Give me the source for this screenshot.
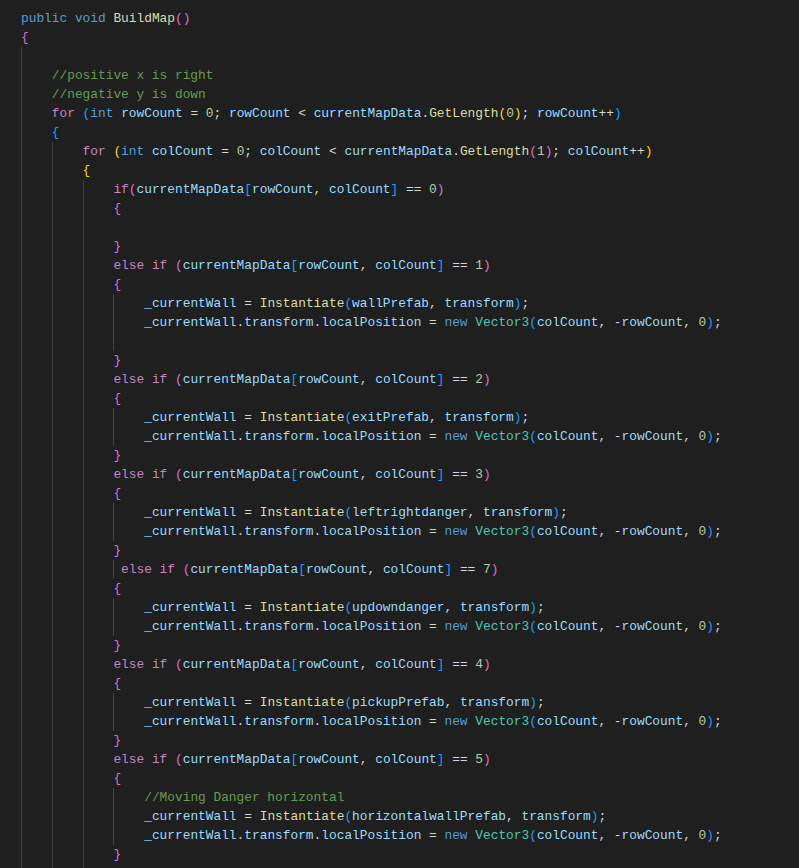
const LINES = [
  'public void BuildMap()',
  '{',
  '',
  '    //positive x is right',
  '    //negative y is down',
  '    for (int rowCount = 0; rowCount < currentMapData.GetLength(0); rowCount++)',
  '    {',
  '        for (int colCount = 0; colCount < currentMapData.GetLength(1); colCount++)',
  '        {',
  '            if(currentMapData[rowCount, colCount] == 0)',
  '            {',
  '',
  '            }',
  '            else if (currentMapData[rowCount, colCount] == 1)',
  '            {',
  '                _currentWall = Instantiate(wallPrefab, transform);',
  '                _currentWall.transform.localPosition = new Vector3(colCount, -rowCount, 0);',
  '',
  '            }',
  '            else if (currentMapData[rowCount, colCount] == 2)',
  '            {',
  '                _currentWall = Instantiate(exitPrefab, transform);',
  '                _currentWall.transform.localPosition = new Vector3(colCount, -rowCount, 0);',
  '            }',
  '            else if (currentMapData[rowCount, colCount] == 3)',
  '            {',
  '                _currentWall = Instantiate(leftrightdanger, transform);',
  '                _currentWall.transform.localPosition = new Vector3(colCount, -rowCount, 0);',
  '            }',
  '             else if (currentMapData[rowCount, colCount] == 7)',
  '            {',
  '                _currentWall = Instantiate(updowndanger, transform);',
  '                _currentWall.transform.localPosition = new Vector3(colCount, -rowCount, 0);',
  '            }',
  '            else if (currentMapData[rowCount, colCount] == 4)',
  '            {',
  '                _currentWall = Instantiate(pickupPrefab, transform);',
  '                _currentWall.transform.localPosition = new Vector3(colCount, -rowCount, 0);',
  '            }',
  '            else if (currentMapData[rowCount, colCount] == 5)',
  '            {',
  '                //Moving Danger horizontal',
  '                _currentWall = Instantiate(horizontalwallPrefab, transform);',
  '                _currentWall.transform.localPosition = new Vector3(colCount, -rowCount, 0);',
  '            }',
  '            else if (currentMapData[rowCount, colCount] == 6)',
]

// indentation of the blank lines, for the guides
const BLANK_INDENT = { 2: 4, 11: 12, 17: 16 }

const C = {
  plain: 'text-[#d4d4d4]',
  kw: 'text-[#569cd6]',
  ctrl: 'text-[#c586c0]',
  fn: 'text-[#dcdcaa]',
  vr: 'text-[#9cdcfe]',
  num: 'text-[#b5cea8]',
  type: 'text-[#4ec9b0]',
  comment: 'text-[#6a9955]',
}
const BRACKETS = ['text-[#ffd700]', 'text-[#da70d6]', 'text-[#179fff]']

const KEYWORDS = ['public', 'void', 'int', 'new']
const CONTROL = ['for', 'if', 'else']
const TYPES = ['Vector3']

// tiny C# highlighter with bracket pair colours, depth carried across lines
function tokenize(lines) {
  let depth = 1
  return lines.map(line => {
    const out = []
    let i = 0
    const push = (text, cls) => out.push({ text, cls })
    while (i < line.length) {
      const rest = line.slice(i)
      if (rest.startsWith('//')) { push(rest, C.comment); break }
      const ch = line[i]
      if ('([{'.includes(ch)) { push(ch, BRACKETS[depth % 3]); depth++; i++; continue }
      if (')]}'.includes(ch)) { depth--; push(ch, BRACKETS[depth % 3]); i++; continue }
      let m = rest.match(/^[A-Za-z_][A-Za-z0-9_]*/)
      if (m) {
        const w = m[0]
        const next = line[i + w.length]
        let cls = C.vr
        if (KEYWORDS.includes(w)) cls = C.kw
        else if (CONTROL.includes(w)) cls = C.ctrl
        else if (TYPES.includes(w)) cls = C.type
        else if (next === '(') cls = C.fn
        push(w, cls); i += w.length; continue
      }
      m = rest.match(/^[0-9]+/)
      if (m) { push(m[0], C.num); i += m[0].length; continue }
      m = rest.match(/^[^A-Za-z0-9_()[\]{}/]+/)
      if (m) { push(m[0], C.plain); i += m[0].length; continue }
      push(ch, C.plain); i++
    }
    return out
  })
}

function Guides({ indent }) {
  const chunks = []
  for (let col = 0; col < indent; col += 4) {
    chunks.push(Math.min(4, indent - col))
  }
  return chunks.map((n, k) => (
    <span key={k} className="inline-block h-[19px] align-top shadow-[inset_1px_0_0_#404040]">
      {' '.repeat(n)}
    </span>
  ))
}

export default function App() {
  const tokens = tokenize(LINES.map(l => l.trimStart()))

  return (
    <div className="h-[868px] w-full overflow-hidden bg-[#1f1f1f] pl-[21px] pt-[9px] font-['Liberation_Mono','DejaVu_Sans_Mono',monospace] text-[12.83px] text-[#d4d4d4]">
      {LINES.map((line, idx) => {
        const indent = line.trim() === '' ? (BLANK_INDENT[idx] || 0) : line.length - line.trimStart().length
        return (
          <div key={idx} className="h-[19px] whitespace-pre leading-[19px]">
            <Guides indent={indent} />
            {tokens[idx].map((t, k) => (
              <span key={k} className={t.cls}>{t.text}</span>
            ))}
          </div>
        )
      })}
    </div>
  )
}
